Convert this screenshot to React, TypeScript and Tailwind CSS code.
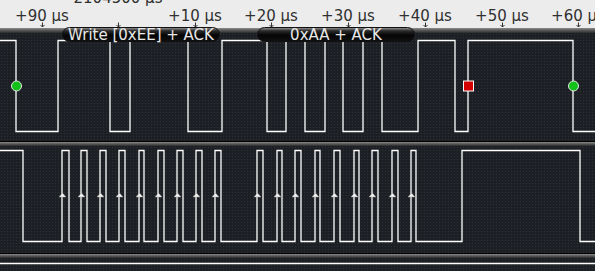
import React from 'react'

const W = 595

// toggle positions for each channel (x in px)
const sdaEdges = [16, 58, 110, 130, 188, 222, 267, 286, 305, 325, 343, 363, 382, 418, 455, 468, 573]
const sclEdges = [
  23, 62, 69, 81, 87, 100, 106, 119, 125, 139, 144, 158, 164, 177, 183, 196, 202, 215, 221,
  257, 263, 277, 282, 295, 301, 315, 320, 334, 340, 354, 359, 372, 378, 392, 398, 411, 416,
  462, 580,
]
// rising clock edges get a little marker
const clkRises = [62, 81, 100, 119, 139, 158, 177, 196, 215, 257, 277, 295, 315, 334, 354, 372, 392, 411]

const ticks = [
  { x: 42, label: '+90 µs' },
  { x: 118, label: '' },
  { x: 195, label: '+10 µs' },
  { x: 271, label: '+20 µs' },
  { x: 348, label: '+30 µs' },
  { x: 425, label: '+40 µs' },
  { x: 502, label: '+50 µs' },
  { x: 578, label: '+60 µs' },
]

function wavePath(edges: number[], hi: number, lo: number, startHigh: boolean) {
  let y = startHigh ? hi : lo
  let d = `M0 ${y}`
  for (const x of edges) {
    d += ` H${x}`
    y = y === hi ? lo : hi
    d += ` V${y}`
  }
  d += ` H${W}`
  return d
}

const dotted =
  'bg-[#1c1f24] bg-[radial-gradient(circle,#2e3238_0.8px,transparent_1px)] bg-[length:3px_3px]'

function Band({ top = true }: { top?: boolean }) {
  return (
    <div
      className={`h-[5px] bg-[linear-gradient(to_bottom,#8c8c8c,#5a5a5a_45%,#2c2c2c)] ${
        top ? '' : 'border-t border-black'
      }`}
    />
  )
}

function Pill({ left, width, text }: { left: number; width: number; text: string }) {
  return (
    <div
      className="absolute top-[27px] h-[15px] rounded-[8px] border border-[#111] bg-[linear-gradient(to_bottom,#8a8a8a_0%,#2a2a2a_22%,#050505_55%,#101010_100%)] flex items-start justify-center"
      style={{ left, width }}
    >
      <span className="text-[15px] leading-[15px] text-[#e8e8e8] whitespace-nowrap">{text}</span>
    </div>
  )
}

export default function App() {
  return (
    <div className="relative w-[595px] h-[271px] overflow-hidden font-['DejaVu_Sans',sans-serif] bg-[#1c1f24]">
      {/* time ruler */}
      <div className="relative h-[28px] bg-[#ececec] text-[#303030]">
        <span className="absolute top-[-9px] left-[118px] -translate-x-1/2 text-[15px] leading-[15px] whitespace-nowrap">
          2104500 µs
        </span>
        {ticks.map((t) =>
          t.label ? (
            <span
              key={t.x}
              className="absolute top-[9px] -translate-x-1/2 text-[15px] leading-[15px] whitespace-nowrap"
              style={{ left: t.x }}
            >
              {t.label}
            </span>
          ) : null
        )}
        <svg width={W} height={28} className="absolute inset-0">
          {ticks.map((t) => (
            <path
              key={t.x}
              d={`M${t.x + 0.5} 22.5 V27 M${t.x - 1.5} 25 L${t.x + 0.5} 27 L${t.x + 2.5} 25`}
              stroke="#333"
              strokeWidth={1}
              fill="none"
            />
          ))}
        </svg>
      </div>

      {/* SDA */}
      <div className="h-[113px] flex flex-col">
        <Band />
        <div className={`flex-1 ${dotted}`}>
          <svg width={W} height={108} className="block">
            <path
              d={wavePath(sdaEdges, 7.5, 98.5, true)}
              stroke="#fff"
              strokeWidth={1.3}
              fill="none"
            />
            <circle cx={16.5} cy={53} r={5} fill="#12c21a" stroke="#e6e6e6" strokeWidth={1} />
            <rect x={463.5} y={48} width={10} height={10} fill="#d40000" stroke="#fff" strokeWidth={1} />
            <circle cx={573.5} cy={53} r={5} fill="#12c21a" stroke="#e6e6e6" strokeWidth={1} />
          </svg>
        </div>
      </div>

      {/* SCL */}
      <div className="h-[112px] flex flex-col">
        <Band top={false} />
        <div className={`flex-1 ${dotted}`}>
          <svg width={W} height={106} className="block">
            <path
              d={wavePath(sclEdges, 4.5, 95.5, true)}
              stroke="#fff"
              strokeWidth={1.3}
              fill="none"
            />
            {clkRises.map((x) => (
              <polygon
                key={x}
                points={`${x - 3},${51} ${x + 4},${51} ${x + 0.5},${47}`}
                fill="#f4f4f4"
                stroke="#9a9a9a"
                strokeWidth={0.5}
              />
            ))}
          </svg>
        </div>
      </div>

      {/* third channel, mostly off screen */}
      <div className="h-[18px] flex flex-col">
        <Band top={false} />
        <div className={`flex-1 ${dotted}`}>
          <svg width={W} height={12} className="block">
            <path d={`M0 5.5 H${W}`} stroke="#fff" strokeWidth={1.3} fill="none" />
          </svg>
        </div>
      </div>

      {/* decoder annotations */}
      <Pill left={62} width={158} text="Write [0xEE] + ACK" />
      <Pill left={257} width={158} text="0xAA + ACK" />
    </div>
  )
}
